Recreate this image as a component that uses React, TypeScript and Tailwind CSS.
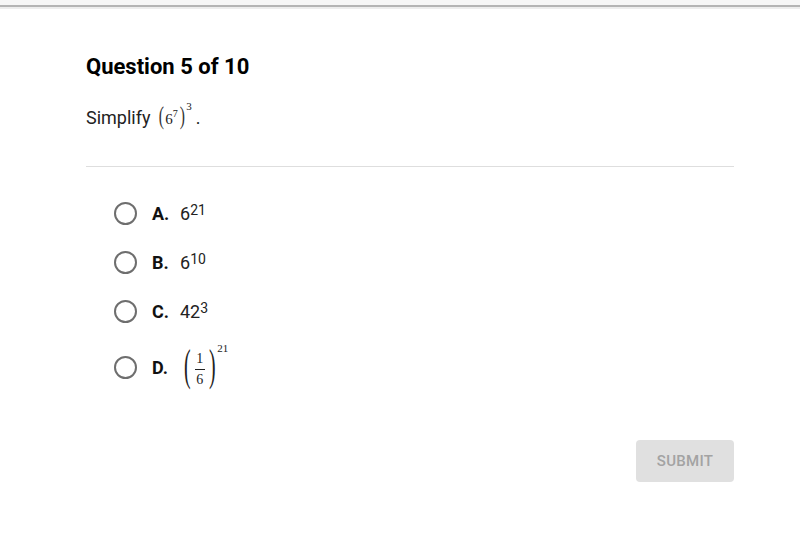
import React from 'react';

const Radio = () => (
  <span className="w-[23px] h-[23px] rounded-full border-2 border-[#6e6e6e] bg-white shrink-0" />
);

const Paren = ({ side, size }: { side: '(' | ')'; size: string }) => (
  <span className={`font-['Liberation_Serif',serif] font-light text-[#333] ${size} leading-none scale-x-[0.6]`}>
    {side}
  </span>
);

const Expression = () => (
  <span className="inline-flex items-start font-['Liberation_Serif',serif] text-[#222] ml-[6px]">
    <Paren side="(" size="text-[26px]" />
    <span className="text-[15px] mt-[5px]">6</span>
    <span className="text-[10px] mt-[3px]">7</span>
    <Paren side=")" size="text-[26px]" />
    <span className="text-[11px] -mt-[5px]">3</span>
  </span>
);

const Fraction = () => (
  <span className="inline-flex items-start font-['Liberation_Serif',serif] text-[#222]">
    <span className="text-[44px] leading-none scale-x-[0.45] font-light -mt-[2px]">(</span>
    <span className="flex flex-col items-center text-[14px] leading-none mt-[6px]">
      <span>1</span>
      <span className="w-[10px] h-px bg-[#222] my-[3px]" />
      <span>6</span>
    </span>
    <span className="text-[44px] leading-none scale-x-[0.45] font-light -mt-[2px]">)</span>
    <span className="text-[11px] -mt-[6px] -ml-[2px]">21</span>
  </span>
);

const Sup = ({ children }: { children: React.ReactNode }) => (
  <sup className="text-[14px] relative -top-[5px]">{children}</sup>
);

const options: { letter: string; content: React.ReactNode }[] = [
  { letter: 'A.', content: <span>6<Sup>21</Sup></span> },
  { letter: 'B.', content: <span>6<Sup>10</Sup></span> },
  { letter: 'C.', content: <span>42<Sup>3</Sup></span> },
  { letter: 'D.', content: <Fraction /> },
];

export default function App() {
  return (
    <div className="w-[800px] h-[542px] bg-white font-['Roboto',sans-serif] text-[#111] overflow-hidden">
      <div className="h-[5px] bg-[#f6f6f6]" />
      <div className="h-[2px] bg-[#b4b4b4]" />
      <div className="h-[2px] bg-[#ededed]" />

      <div className="pl-[86px] pr-[66px] w-[800px]">
        <h1 className="mt-[45px] text-[22px] leading-[26px] font-bold text-black">Question 5 of 10</h1>

        <div className="mt-[22px] flex items-center text-[18px] text-[#222] h-[30px]">
          <span>Simplify</span>
          <Expression />
          <span className="ml-[4px]">.</span>
        </div>

        <div className="mt-[34px] h-px bg-[#dedede]" />

        <div className="flex flex-col pl-[28px] mt-[22px]">
          {options.map((o, i) => (
            <div
              key={o.letter}
              className={`flex items-center ${i === 3 ? 'h-[50px] mt-[6px]' : 'h-[49px]'} `}
            >
              <Radio />
              <span className="ml-[15px] w-[28px] text-[18px] font-bold text-[#111]">{o.letter}</span>
              <span className="text-[18px] text-[#222]">{o.content}</span>
            </div>
          ))}
        </div>

        <div className="flex justify-end mt-[48px]">
          <button className="w-[98px] h-[42px] rounded-[4px] bg-[#e0e0e0] text-[#a3a3a3] text-[15px] font-medium tracking-[0.3px]">
            SUBMIT
          </button>
        </div>
      </div>
    </div>
  );
}
